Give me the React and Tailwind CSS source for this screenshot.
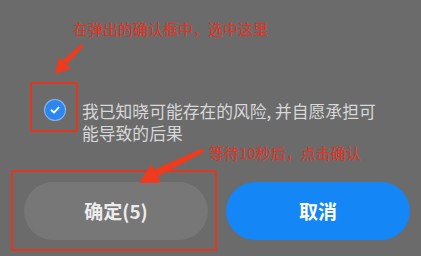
export default function App() {
  const cjk = { fontFamily: '"Noto Sans CJK SC", "Noto Sans", sans-serif' };
  return (
    <div className="relative w-[421px] h-[256px] overflow-hidden bg-[#6b6b6b]" style={cjk}>
      {/* main content */}
      <div className="flex flex-col pt-[100px]">
        <div className="flex items-start pl-[45px]">
          <div className="flex h-[20px] w-[20px] shrink-0 items-center justify-center rounded-full bg-[#2a87f2] ring-1 ring-[#8fb8e8]">
            <svg width="12" height="12" viewBox="0 0 12 12" fill="none">
              <path d="M2.5 6.2 L5 8.6 L9.6 3.6" stroke="white" strokeWidth="1.9" strokeLinecap="round" strokeLinejoin="round" />
            </svg>
          </div>
          <p className="ml-[17px] w-[300px] text-[16.8px] leading-[22px] text-[#d8d8d8]">
            我已知晓可能存在的风险, 并自愿承担可能导致的后果
          </p>
        </div>
        <div className="mt-[38px] flex gap-[18px] pl-[24px]">
          <div className="flex h-[58px] w-[184px] items-center justify-center rounded-full bg-[#777777] text-[19px] font-bold text-[#ececec]">
            确定(5)
          </div>
          <div className="flex h-[58px] w-[184px] items-center justify-center rounded-full bg-[#1486f6] text-[19px] font-bold text-white">
            取消
          </div>
        </div>
      </div>

      {/* annotations */}
      <div className="absolute left-[73px] top-[20px] text-[15px] leading-[18px] text-[#e8321f]">
        在弹出的确认框中，选中这里
      </div>
      <div className="absolute left-[209px] top-[145px] text-[15px] leading-[15px] text-[#e8321f]">
        等待10秒后，点击确认
      </div>
      <div className="absolute left-[30px] top-[82px] h-[50px] w-[48px] rounded-[2px] border-2 border-[#e2361f]" />
      <div className="absolute left-[11px] top-[170px] h-[81px] w-[206px] rounded-[2px] border-2 border-[#e2361f]" />
      <svg className="pointer-events-none absolute inset-0" width="421" height="256" viewBox="0 0 421 256">
        <polygon points="81,44 83.5,46.5 67,64.5 62.5,60.8" fill="#f03a1e" />
        <polygon points="55,74 58.9,57.3 71,68.8" fill="#f03a1e" />
        <polygon points="202,148.5 204,152 158,176.5 154.5,169.5" fill="#f03a1e" />
        <polygon points="139,183 151.5,164.5 161,182.5" fill="#f03a1e" />
      </svg>
    </div>
  );
}
